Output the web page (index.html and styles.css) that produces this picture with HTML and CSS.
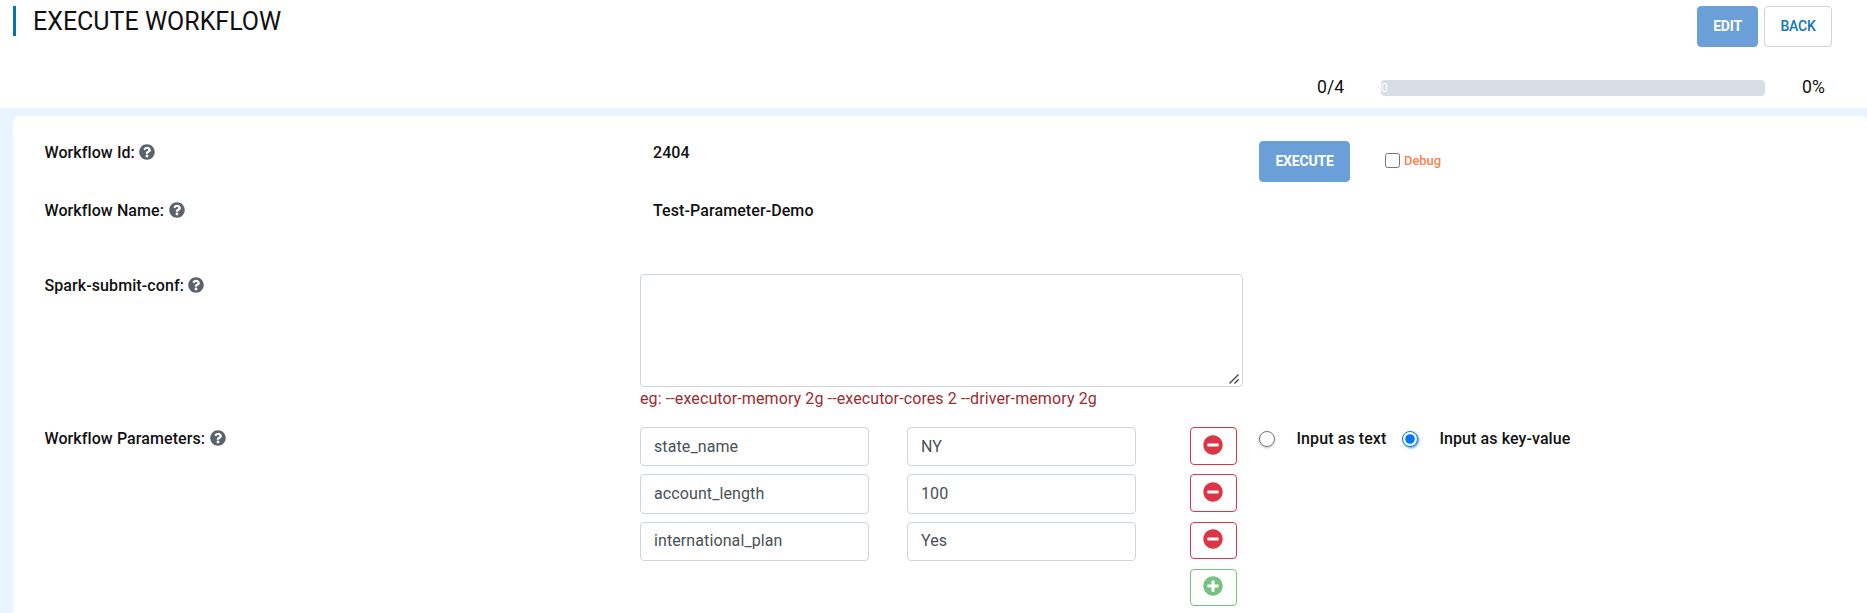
FILE: index.html
```html
<!DOCTYPE html>
<html lang="en">
<head>
<meta charset="utf-8">
<title>Execute Workflow</title>
<link rel="stylesheet" href="styles.css">
</head>
<body>
<svg class="sprite" aria-hidden="true">
  <symbol id="question" viewBox="0 0 512 512"><path d="M504 256c0 137-111 248-248 248S8 393 8 256 119 8 256 8s248 111 248 248zM262.700 90c-54.500 0-89.300 23-116.500 63.800-3.500 5.300-2.400 12.400 2.700 16.300l34.700 26.300c5.200 3.900 12.600 3 16.700-2.100 17.900-22.700 30.100-35.800 57.300-35.800 20.400 0 45.700 13.100 45.700 33 0 15-12.400 22.700-32.500 34C247.100 238.500 216 254.900 216 296v4c0 6.600 5.400 12 12 12h56c6.600 0 12-5.400 12-12v-1.300c0-28.500 83.200-29.600 83.200-106.700 0-58-60.200-102-116.500-102zM256 338c-25.400 0-46 20.600-46 46s20.600 46 46 46 46-20.600 46-46-20.600-46-46-46z"/></symbol>
  <symbol id="minus" viewBox="0 0 512 512"><path d="M256 8C119 8 8 119 8 256s111 248 248 248 248-111 248-248S393 8 256 8zM124 296c-6.600 0-12-5.400-12-12v-56c0-6.600 5.400-12 12-12h264c6.600 0 12 5.400 12 12v56c0 6.600-5.400 12-12 12H124z"/></symbol>
  <symbol id="plus" viewBox="0 0 512 512"><path d="M256 8C119 8 8 119 8 256s111 248 248 248 248-111 248-248S393 8 256 8zm144 276c0 6.600-5.400 12-12 12h-92v92c0 6.600-5.400 12-12 12h-56c-6.600 0-12-5.400-12-12v-92h-92c-6.600 0-12-5.400-12-12v-56c0-6.600 5.400-12 12-12h92v-92c0-6.600 5.400-12 12-12h56c6.600 0 12 5.400 12 12v92h92c6.600 0 12 5.400 12 12v56z"/></symbol>
</svg>
<header class="header">
  <div class="header-top">
    <h1 class="title">EXECUTE WORKFLOW</h1>
    <div class="actions">
      <button class="btn btn-primary btn-edit">EDIT</button>
      <button class="btn btn-back">BACK</button>
    </div>
  </div>
  <div class="status">
    <span class="count">0/4</span>
    <div class="progress">0</div>
    <span class="percent">0%</span>
  </div>
</header>
<main class="panel">
  <section class="row row-id">
    <div class="label">Workflow Id: <svg class="help"><use href="#question"/></svg></div>
    <div class="value">2404</div>
    <div class="run">
      <button class="btn btn-primary btn-execute">EXECUTE</button>
      <label class="debug"><input type="checkbox" class="check">Debug</label>
    </div>
  </section>
  <section class="row row-name">
    <div class="label">Workflow Name: <svg class="help"><use href="#question"/></svg></div>
    <div class="value">Test-Parameter-Demo</div>
  </section>
  <section class="row row-conf">
    <div class="label">Spark-submit-conf: <svg class="help"><use href="#question"/></svg></div>
    <div class="conf">
      <textarea class="field area"></textarea>
      <svg class="grip" viewBox="0 0 10 10"><path d="M0.500 9.500 9.500 0.500M5.500 9.500 9.500 5.500"/></svg>
      <div class="hint">eg: --executor-memory 2g --executor-cores 2 --driver-memory 2g</div>
    </div>
  </section>
  <section class="row row-params">
    <div class="label">Workflow Parameters: <svg class="help"><use href="#question"/></svg></div>
    <div class="params">
      <div class="param"><input class="field" value="state_name"><input class="field" value="NY"><button class="icon-btn"><svg class="icon"><use href="#minus"/></svg></button></div>
      <div class="param"><input class="field" value="account_length"><input class="field" value="100"><button class="icon-btn"><svg class="icon"><use href="#minus"/></svg></button></div>
      <div class="param"><input class="field" value="international_plan"><input class="field" value="Yes"><button class="icon-btn"><svg class="icon"><use href="#minus"/></svg></button></div>
      <div class="param"><button class="icon-btn add"><svg class="icon"><use href="#plus"/></svg></button></div>
    </div>
    <div class="modes">
      <label class="mode"><input type="radio" name="mode" class="radio">Input as text</label>
      <label class="mode"><input type="radio" name="mode" class="radio" checked>Input as key-value</label>
    </div>
  </section>
</main>
</body>
</html>
```
FILE: styles.css
```css
* { box-sizing: border-box; }
body {
  margin: 0;
  height: 613px;
  overflow: hidden;
  display: flex;
  flex-direction: column;
  background: #eaf4ff;
  color: #111;
  font: 16px/24px Roboto, sans-serif;
}
button, input, textarea { font-family: inherit; margin: 0; }
.sprite { display: none; }
.header { height: 108px; flex: none; background: #fff; padding: 6px 35px 0 13px; }
.header-top { display: flex; justify-content: space-between; height: 41px; }
.title {
  margin: 0;
  height: 30px;
  border-left: 3px solid #0275b1;
  padding-left: 17px;
  color: #111;
  font-size: 25px;
  font-weight: 400;
  line-height: 31px;
}
.actions { display: flex; gap: 6px; }
.btn {
  height: 41px;
  padding: 0 0 1px;
  border: 1px solid #6a9fd8;
  border-radius: 4px;
  font-size: 14px;
  font-weight: 500;
  letter-spacing: -.2px;
}
.btn-primary { background: #6a9fd8; color: #fff; font-weight: 700; }
.btn-edit { width: 61px; }
.btn-back { width: 68px; background: #fff; border-color: #ced4da; color: #0f75b3; }
.status { display: flex; align-items: center; height: 24px; margin: 28px 0 0 1304px; font-size: 17.6px; }
.count { width: 64px; }
.progress {
  width: 384px;
  height: 16px;
  margin: 2px 37px 0 0;
  border-radius: 4px;
  background: #d7dee5;
  color: #fff;
  font-size: 12px;
  line-height: 16px;
}
.panel { flex: 1; margin: 8px 0 0 13px; padding: 25px 0 0 32px; background: #fff; border-radius: 6px 6px 0 0; }
.row { display: grid; grid-template-columns: 595px 604px 1fr; font-weight: 500; letter-spacing: .09px; }
.row-id { height: 58px; }
.row-name { height: 75px; }
.row-conf { height: 153px; }
.label { display: flex; align-items: center; gap: 4.5px; height: 24px; margin-left: -.5px; }
.help { width: 16px; height: 16px; fill: #5b626b; margin-top: -2px; }
.value { padding-left: 13px; }
.run { display: flex; align-items: flex-start; gap: 35px; padding-left: 15px; }
.btn-execute { width: 91px; }
.debug { display: flex; align-items: center; gap: 4px; height: 40px; color: #f58250; font-size: 13px; font-weight: 500; letter-spacing: -.05px; }
.check { width: 15px; height: 15px; margin-top: -1px; }
.field {
  border: 1px solid #ced4da;
  border-radius: 4px;
  padding: 6px 13px;
  color: #495057;
  background: #fff;
  font-size: 16px;
  letter-spacing: .1px;
}
.conf { position: relative; }
.area { display: block; width: 603px; height: 113px; resize: none; }
.grip { position: absolute; left: 589px; top: 100px; width: 10px; height: 10px; fill: none; stroke: #444; stroke-width: 1.4; }
.hint { color: #9b2c31; font-weight: 400; letter-spacing: .11px; }
.params { display: flex; flex-direction: column; gap: 8px; }
.param { display: grid; grid-template-columns: 229px 229px 47px; column-gap: 38px; justify-content: start; height: 39.3px; }
.param .field { width: 229px; height: 39.3px; padding-bottom: 7px; }
.icon-btn {
  grid-column: 3;
  width: 47px;
  height: 37.6px;
  margin-left: 16px;
  padding: 0 1px 2.5px 0;
  display: flex;
  align-items: center;
  justify-content: center;
  border: 1px solid #dc3545;
  border-radius: 4px;
  background: #fff;
  fill: #dc3545;
}
.add { border-color: #76c381; fill: #76c381; }
.icon { width: 20px; height: 20px; }
.modes { display: flex; gap: 15.5px; height: 24px; padding-left: 15px; }
.mode { display: flex; align-items: center; gap: 21.5px; }
.radio { width: 16px; height: 16px; margin-top: -1px; filter: drop-shadow(0 1px 1px rgba(80, 100, 130, .35)); }
.radio:checked { filter: drop-shadow(1px 1px 1px #4d93df); }
```
